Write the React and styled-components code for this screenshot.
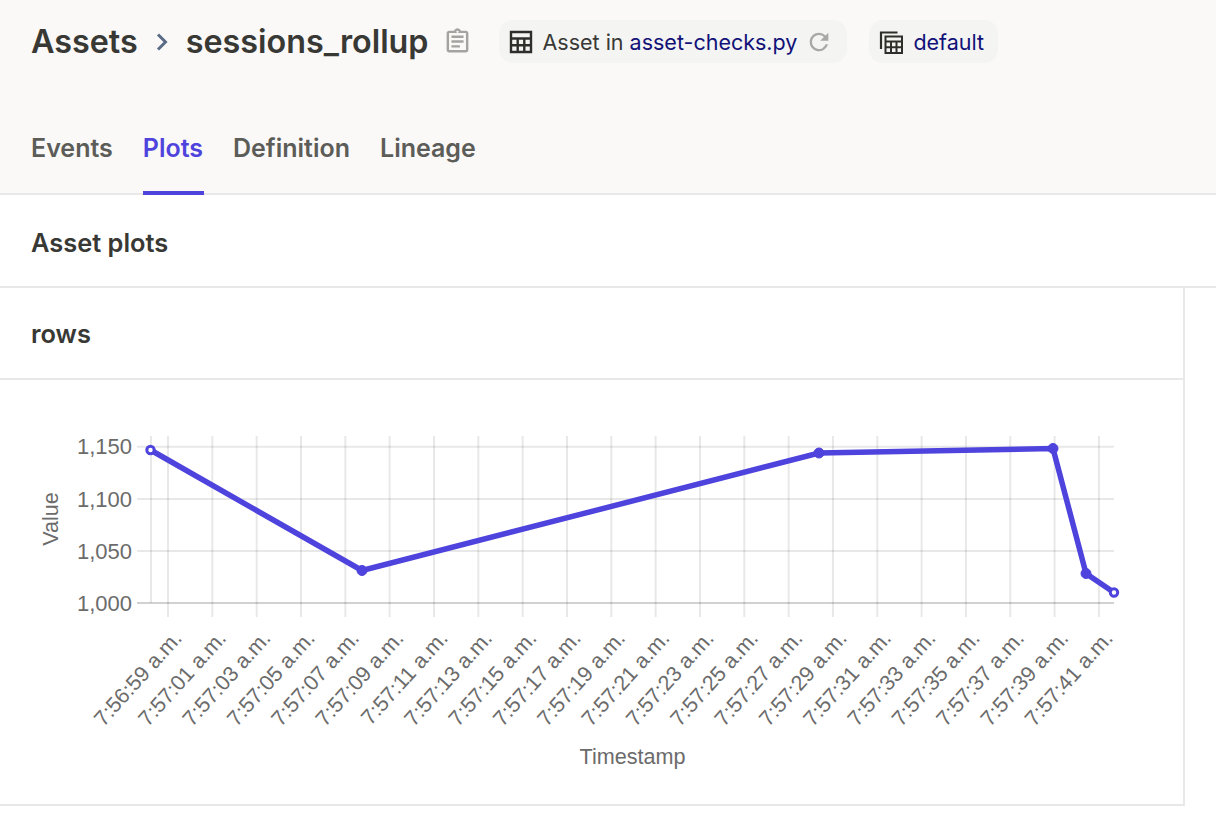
import React from "react";
import styled, { createGlobalStyle } from "styled-components";

const Global = createGlobalStyle`
  html, body { margin: 0; padding: 0; background: #ffffff; }
  body { font-family: Inter, "Liberation Sans", sans-serif; overflow: hidden; }
`;

const Page = styled.div`
  width: 1216px;
  height: 830px;
  overflow: hidden;
  background: #fff;
`;
const Header = styled.header`
  height: 195px;
  box-sizing: border-box;
  background: #faf9f7;
  border-bottom: 2px solid #e8e8e8;
  display: flex;
  flex-direction: column;
  justify-content: space-between;
  padding: 20px 0 0 31px;
`;
const TitleRow = styled.div`
  display: flex;
  align-items: center;
  height: 43px;
`;
const Title = styled.h1`
  margin: 0;
  font-size: 32.3px;
  line-height: 45px;
  font-weight: 600;
  color: #383835;
`;
const Chevron = styled.svg`
  width: 14px;
  height: 22px;
  margin: 0 17px 0 17px;
`;
const CopyIcon = styled.svg`
  width: 29px;
  height: 29px;
  margin: 0 27px 0 14px;
`;
const Pill = styled.div`
  display: flex;
  align-items: center;
  height: 43px;
  padding: 0 ${(p) => p.$right}px 0 10px;
  margin-right: 22px;
  border-radius: 14px;
  background: #f4f4f3;
  font-size: 21.5px;
  color: #383835;
  white-space: nowrap;
`;
const PillIcon = styled.svg`
  width: 24px;
  height: 24px;
  margin-right: 10px;
`;
const RepoLink = styled.a`
  color: #111178;
  margin-left: 6px;
`;
const PlainLink = styled.a`
  color: #111178;
`;
const Reload = styled.svg`
  width: 28px;
  height: 28px;
  margin-left: 8px;
`;
const Tabs = styled.nav`
  display: flex;
  gap: 29px;
  margin-bottom: -2px;
`;
const Tab = styled.div`
  height: 67px;
  box-sizing: border-box;
  font-size: 25px;
  line-height: 30px;
  padding: 5px 1px 0 0;
  font-weight: 600;
  color: ${(p) => (p.$active ? "#4f43dd" : "#5c5c58")};
  border-bottom: 4px solid ${(p) => (p.$active ? "#4f43dd" : "transparent")};
`;
const SectionBar = styled.div`
  height: 93px;
  box-sizing: border-box;
  padding: 3px 0 0 31px;
  display: flex;
  align-items: center;
  border-bottom: 2px solid #e8e8e8;
  font-size: 25.4px;
  font-weight: 600;
  color: #383835;
`;
const Card = styled.section`
  width: 1185px;
  height: 518px;
  box-sizing: border-box;
  border-right: 2px solid #e8e8e8;
  border-bottom: 2px solid #e8e8e8;
`;
const CardHead = styled.div`
  height: 92px;
  box-sizing: border-box;
  padding-left: 31px;
  display: flex;
  align-items: center;
  border-bottom: 2px solid #e8e8e8;
  font-size: 25.4px;
  font-weight: 600;
  color: #383835;
`;
const Chart = styled.svg`
  display: block;
  width: 1183px;
  height: 424px;
  font-family: "Liberation Sans", Arial, sans-serif;
  fill: #6b6b6b;
`;

const TOP = 380;
const ticksY = [
  ["1,150", 446.7],
  ["1,100", 499],
  ["1,050", 551],
  ["1,000", 603],
];
const names = [
  "7:56:59", "7:57:01", "7:57:03", "7:57:05", "7:57:07", "7:57:09", "7:57:11", "7:57:13",
  "7:57:15", "7:57:17", "7:57:19", "7:57:21", "7:57:23", "7:57:25", "7:57:27", "7:57:29",
  "7:57:31", "7:57:33", "7:57:35", "7:57:37", "7:57:39", "7:57:41",
];
const pts = [
  [150.5, 450],
  [362, 570.5],
  [819, 453],
  [1053, 448.5],
  [1086, 573.5],
  [1114, 592.5],
];

function PlotChart() {
  return (
    <Chart viewBox={`0 ${TOP} 1183 424`}>
      <g stroke="rgba(0,0,0,0.09)" strokeWidth="2">
        {ticksY.map(([, y], i) => (
          <line key={y} x1="137" x2="1114" y1={y} y2={y} stroke={i === 3 ? "rgba(0,0,0,0.18)" : undefined} />
        ))}
        <line x1="151" x2="151" y1="436" y2="603" />
        {names.map((n, i) => {
          const x = 168 + i * 44.33;
          return <line key={n} x1={x} x2={x} y1="436" y2="617" />;
        })}
      </g>
      {ticksY.map(([t, y]) => (
        <text key={t} x="132" y={y + 7.5} textAnchor="end" fontSize="22">
          {t}
        </text>
      ))}
      {names.map((n, i) => {
        const x = 183 + i * 44.33;
        return (
          <text key={n} transform={`translate(${x} 639) rotate(-48)`} textAnchor="end" fontSize="21.4">
            {n} a.m.
          </text>
        );
      })}
      <text transform="translate(58 519) rotate(-90)" textAnchor="middle" fontSize="21.6">Value</text>
      <text x="632.5" y="764" textAnchor="middle" fontSize="21.6">Timestamp</text>
      <polyline points={pts.map((p) => p.join(",")).join(" ")} fill="none" stroke="#4f43dd" strokeWidth="5.5" />
      {pts.map(([x, y], i) => (
        <circle
          key={x}
          cx={x}
          cy={y}
          r={i === 0 || i === 5 ? 3.7 : 5}
          fill={i === 0 || i === 5 ? "#fff" : "#4f43dd"}
          stroke="#4f43dd"
          strokeWidth={i === 0 || i === 5 ? 3 : 1}
        />
      ))}
    </Chart>
  );
}

export default function App() {
  return (
    <Page>
      <Global />
      <Header>
        <TitleRow>
          <Title>Assets</Title>
          <Chevron viewBox="0 0 14 22">
            <path d="M3 3.5 L10.5 11 L3 18.5" fill="none" stroke="#5a6b85" strokeWidth="3" />
          </Chevron>
          <Title>sessions_rollup</Title>
          <CopyIcon viewBox="0 0 24 24">
            <path
              fill="#a3a3a0"
              d="M19 3h-4.18C14.4 1.84 13.3 1 12 1s-2.4.84-2.82 2H5c-1.1 0-2 .9-2 2v14c0 1.1.9 2 2 2h14c1.1 0 2-.9 2-2V5c0-1.1-.9-2-2-2zm-7 0c.55 0 1 .45 1 1s-.45 1-1 1-1-.45-1-1 .45-1 1-1zm7 16H5V5h14v14zM7 15h7v2H7zM7 11h10v2H7zM7 7h10v2H7z"
            />
          </CopyIcon>
          <Pill $right={14}>
            <PillIcon viewBox="0 0 24 24">
              <path
                fill="none"
                stroke="#2e2e2b"
                strokeWidth="2.4"
                d="M2 2h20v20H2zM2 8.5h20M2 15.2h20M8.7 8.5V22M15.3 8.5V22"
              />
            </PillIcon>
            Asset in<RepoLink>asset-checks.py</RepoLink>
            <Reload viewBox="0 0 24 24">
              <path
                fill="#a8a8a5"
                d="M17.65 6.35A7.96 7.96 0 0 0 12 4a8 8 0 1 0 7.73 10h-2.08A6 6 0 1 1 12 6c1.66 0 3.14.69 4.22 1.78L13 11h7V4l-2.35 2.35z"
              />
            </Reload>
          </Pill>
          <Pill $right={14}>
            <PillIcon viewBox="0 0 24 24">
              <path
                fill="none"
                stroke="#2e2e2b"
                strokeWidth="2"
                d="M6.5 6.5h16.5v16.5H6.5zM6.5 11.5h16.5M6.5 17.2h16.5M12 11.5V23M17.5 11.5V23"
              />
              <path fill="none" stroke="#2e2e2b" strokeWidth="2.2" d="M2 19V2.5h16.5" />
            </PillIcon>
            <PlainLink>default</PlainLink>
          </Pill>
        </TitleRow>
        <Tabs>
          <Tab>Events</Tab>
          <Tab $active>Plots</Tab>
          <Tab>Definition</Tab>
          <Tab>Lineage</Tab>
        </Tabs>
      </Header>
      <SectionBar>Asset plots</SectionBar>
      <Card>
        <CardHead>rows</CardHead>
        <PlotChart />
      </Card>
    </Page>
  );
}
